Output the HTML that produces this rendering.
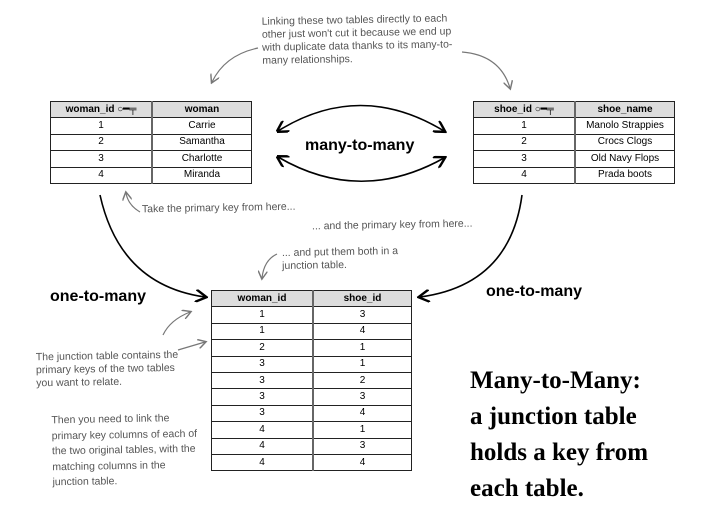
<!DOCTYPE html>
<html><head><style>
body{margin:0;width:720px;height:503px;background:#fff;position:relative;overflow:hidden;font-family:"Liberation Sans",sans-serif}
.a{position:absolute}
table{position:absolute;border-collapse:collapse;font-size:10px;color:#000}
td,th{border:1px solid #222;height:15.4px;padding:0;text-align:center;line-height:14px}
th{background:#ddd;font-weight:bold;font-size:10px}
td.l,th.l{border-right:2px solid #666}
.h{color:#555;font-size:10.5px;line-height:13px;transform:rotate(-1deg)}
.b{font-weight:bold;font-size:16px;color:#000}
.big{font-family:"Liberation Serif",serif;font-weight:bold;font-size:25px;color:#000;line-height:36px}
</style></head><body>
<table style="left:50px;top:101px;width:202px">
<tr><th class="l" style="width:100px">woman_id ○━╤</th><th>woman</th></tr>
<tr><td class="l">1</td><td>Carrie</td></tr>
<tr><td class="l">2</td><td>Samantha</td></tr>
<tr><td class="l">3</td><td>Charlotte</td></tr>
<tr><td class="l">4</td><td>Miranda</td></tr>
</table>
<table style="left:473px;top:101px;width:202px">
<tr><th class="l" style="width:100px">shoe_id ○━╤</th><th>shoe_name</th></tr>
<tr><td class="l">1</td><td>Manolo Strappies</td></tr>
<tr><td class="l">2</td><td>Crocs Clogs</td></tr>
<tr><td class="l">3</td><td>Old Navy Flops</td></tr>
<tr><td class="l">4</td><td>Prada boots</td></tr>
</table>
<table style="left:211px;top:290px;width:201px">
<tr><th class="l" style="width:100px">woman_id</th><th>shoe_id</th></tr>
<tr><td class="l">1</td><td>3</td></tr>
<tr><td class="l">1</td><td>4</td></tr>
<tr><td class="l">2</td><td>1</td></tr>
<tr><td class="l">3</td><td>1</td></tr>
<tr><td class="l">3</td><td>2</td></tr>
<tr><td class="l">3</td><td>3</td></tr>
<tr><td class="l">3</td><td>4</td></tr>
<tr><td class="l">4</td><td>1</td></tr>
<tr><td class="l">4</td><td>3</td></tr>
<tr><td class="l">4</td><td>4</td></tr>
</table>
<div class="a h" style="left:262px;top:14px;width:200px">Linking these two tables directly to each other just won't cut it because we end up with duplicate data thanks to its many-to-many relationships.</div>
<div class="a b" style="left:305px;top:137px">many-to-many</div>
<div class="a b" style="left:50px;top:288px">one-to-many</div>
<div class="a b" style="left:486px;top:283px">one-to-many</div>
<div class="a h" style="left:142px;top:202px">Take the primary key from here...</div>
<div class="a h" style="left:312px;top:219px">... and the primary key from here...</div>
<div class="a h" style="left:282px;top:246px;width:120px">... and put them both in a junction table.</div>
<div class="a h" style="left:36px;top:350px;width:150px">The junction table contains the primary keys of the two tables you want to relate.</div>
<div class="a h" style="left:52px;top:412px;width:150px;line-height:15.5px">Then you need to link the primary key columns of each of the two original tables, with the matching columns in the junction table.</div>
<div class="a big" style="left:470px;top:363px">Many-to-Many:<br>a junction table<br>holds a key from<br>each table.</div>
<svg class="a" style="left:0;top:0" width="720" height="503" fill="none">
<defs><marker id="m" markerWidth="8" markerHeight="8" refX="6" refY="4" orient="auto"><path d="M0,0 L7,4 L0,8" stroke="#000" stroke-width="1.5" fill="none"/></marker>
<marker id="s" markerWidth="8" markerHeight="8" refX="1" refY="4" orient="auto"><path d="M7,0 L0,4 L7,8" stroke="#000" stroke-width="1.5" fill="none"/></marker>
<marker id="g" markerWidth="8" markerHeight="8" refX="6" refY="4" orient="auto"><path d="M0,0 L7,4 L0,8" stroke="#777" stroke-width="1.2" fill="none"/></marker></defs>
<g stroke="#000" stroke-width="1.6">
<path d="M278,131 Q360,80 444,131" marker-start="url(#s)" marker-end="url(#m)"/>
<path d="M278,157 Q360,205 444,158" marker-start="url(#s)" marker-end="url(#m)"/>
<path d="M100,195 Q120,285 205,297" marker-end="url(#m)"/>
<path d="M522,195 Q510,285 420,297" marker-end="url(#m)"/>
</g>
<g stroke="#777" stroke-width="1.2">
<path d="M258,48 Q225,55 212,82" marker-end="url(#g)"/>
<path d="M462,52 Q500,55 510,88" marker-end="url(#g)"/>
<path d="M140,212 Q128,205 126,193" marker-end="url(#g)"/>
<path d="M277,254 Q264,260 262,278" marker-end="url(#g)"/>
<path d="M163,335 Q170,320 190,312" marker-end="url(#g)"/>
<path d="M178,350 Q195,345 205,342" marker-end="url(#g)"/>
</g>
</svg>
</body></html>
